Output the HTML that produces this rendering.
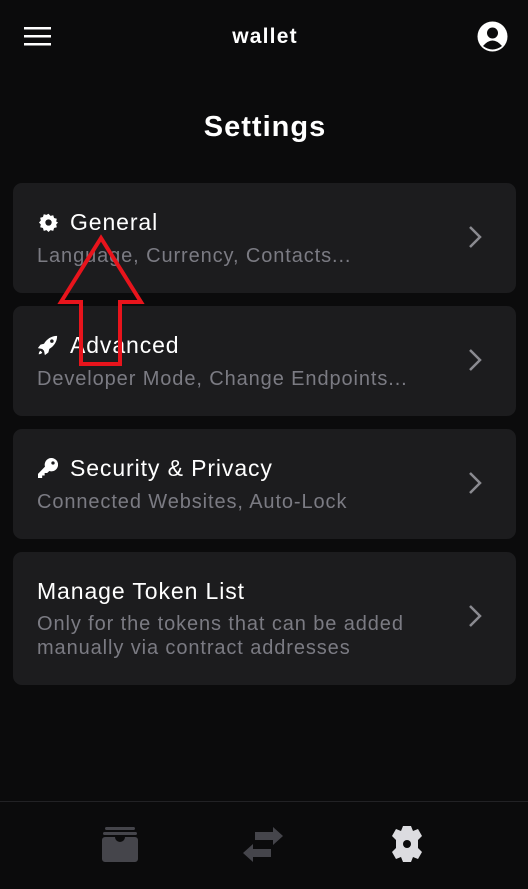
<!DOCTYPE html>
<html><head><style>
body{margin:0;width:528px;height:889px;background:#0b0b0c;font-family:"Liberation Sans",sans-serif;color:#fff;position:relative;overflow:hidden}
.card{position:absolute;left:13px;width:503px;background:#1c1c1e;border-radius:9px}
.t{position:absolute;left:24px;font-size:23px;font-weight:500;letter-spacing:0.9px}
.s{position:absolute;left:24px;font-size:20px;color:#7b7b83;line-height:24px;letter-spacing:0.9px}
.chev{position:absolute;right:34px}
</style></head><body>
<svg style="position:absolute;left:24px;top:27px" width="27" height="19"><rect y="0" width="27" height="2.5" fill="#fff"/><rect y="8" width="27" height="2.5" fill="#fff"/><rect y="16" width="27" height="2.5" fill="#fff"/></svg>
<div style="position:absolute;left:0;width:530px;top:25px;text-align:center;font-weight:bold;font-size:21px;letter-spacing:1.2px">wallet</div>
<svg style="position:absolute;left:477px;top:21px" width="31" height="31" viewBox="0 0 31 31"><circle cx="15.5" cy="15.5" r="15" fill="#fff"/><circle cx="15.5" cy="12" r="5.5" fill="#0b0b0c"/><path d="M6 25 Q15.5 14 25 25 Q15.5 32 6 25Z" fill="#0b0b0c"/></svg>
<div style="position:absolute;left:0;width:530px;top:111px;text-align:center;font-weight:bold;font-size:29px;letter-spacing:1px">Settings</div>

<div class="card" style="top:183px;height:110px">
<svg style="position:absolute;left:26px;top:30px" width="19" height="19" viewBox="0 0 24 24"><path fill="#fff" d="M12 1l2.5 2.6 3.5-.8 1 3.5 3.5 1-.8 3.5L24 12l-2.3 2.5.8 3.5-3.5 1-1 3.5-3.5-.8L12 24l-2.5-2.3-3.5.8-1-3.5-3.5-1 .8-3.5L0 12l2.3-2.5-.8-3.5 3.5-1 1-3.5 3.5.8z"/><circle cx="12" cy="12" r="4" fill="#1c1c1e"/></svg>
<div class="t" style="left:57px;top:26px">General</div>
<div class="s" style="top:61px">Language, Currency, Contacts...</div>
<svg class="chev" style="top:42px" width="14" height="24"><path d="M2 2l10 10-10 10" stroke="#8a8a90" stroke-width="2.5" fill="none"/></svg>
</div>
<div class="card" style="top:306px;height:110px">
<svg style="position:absolute;left:24px;top:29px" width="21" height="21" viewBox="0 0 24 24"><path fill="#fff" d="M23 1C16 1 11 5 8 10L4 11 1 15l5 1 2 2 1 5 4-3 1-4c5-3 9-8 9-15zM17 5a2 2 0 110 4 2 2 0 010-4zM4 18c-2 1-2 4-2 4s3 0 4-2z"/></svg>
<div class="t" style="left:57px;top:26px">Advanced</div>
<div class="s" style="top:61px">Developer Mode, Change Endpoints...</div>
<svg class="chev" style="top:42px" width="14" height="24"><path d="M2 2l10 10-10 10" stroke="#8a8a90" stroke-width="2.5" fill="none"/></svg>
</div>
<div class="card" style="top:429px;height:110px">
<svg style="position:absolute;left:25px;top:29px" width="20" height="20" viewBox="0 0 24 24"><path fill="#fff" d="M16 0a8 8 0 00-7.6 10.4L0 19v5h5v-3h3v-3h3l2.6-2.4A8 8 0 1016 0zm2 4a2 2 0 110 4 2 2 0 010-4z"/></svg>
<div class="t" style="left:57px;top:26px">Security &amp; Privacy</div>
<div class="s" style="top:61px">Connected Websites, Auto-Lock</div>
<svg class="chev" style="top:42px" width="14" height="24"><path d="M2 2l10 10-10 10" stroke="#8a8a90" stroke-width="2.5" fill="none"/></svg>
</div>
<div class="card" style="top:552px;height:133px">
<div class="t" style="top:26px">Manage Token List</div>
<div class="s" style="top:60px">Only for the tokens that can be added<br>manually via contract addresses</div>
<svg class="chev" style="top:52px" width="14" height="24"><path d="M2 2l10 10-10 10" stroke="#8a8a90" stroke-width="2.5" fill="none"/></svg>
</div>

<svg style="position:absolute;left:0;top:0" width="528" height="889"><polygon points="101,238 61,302 81,302 81,364 120,364 120,302 141,302" fill="none" stroke="#e8141c" stroke-width="4"/></svg>

<div style="position:absolute;left:0;top:801px;width:528px;height:1px;background:#222225"></div>
<svg style="position:absolute;left:102px;top:827px" width="36" height="35" viewBox="0 0 36 35"><rect x="3" y="0" width="30" height="3" rx="1.5" fill="#45454b"/><rect x="1" y="5" width="34" height="3" rx="1.5" fill="#45454b"/><path d="M3 10h10a5 5 0 0010 0h10a3 3 0 013 3v19a3 3 0 01-3 3H3a3 3 0 01-3-3V13a3 3 0 013-3z" fill="#45454b"/></svg>
<svg style="position:absolute;left:243px;top:827px" width="40" height="36" viewBox="0 0 40 36"><path d="M12 5h18V0l10 9-10 9v-5H12z M28 22H10v-5L0 26l10 9v-5h18z" fill="#45454b"/></svg>
<svg style="position:absolute;left:390px;top:826px" width="34" height="36" viewBox="0 0 34 36"><path fill="#dcdce0" d="M13 0h8l2 5 5-2 4 7-4 4v8l4 4-4 7-5-2-2 5h-8l-2-5-5 2-4-7 4-4v-8L2 10l4-7 5 2z"/><circle cx="17" cy="18" r="4" fill="#0b0b0c"/></svg>
</body></html>
